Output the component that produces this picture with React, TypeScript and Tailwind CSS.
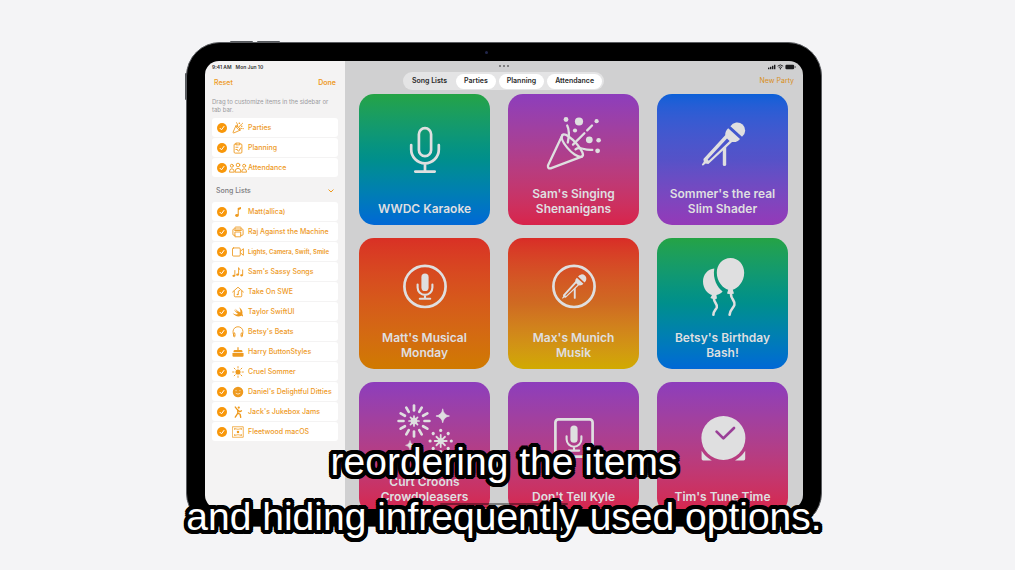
import type { ReactNode } from "react";

const ink = "#dfdfe0";

function Icon({ children }: { children: ReactNode }) {
  return (
    <svg
      viewBox="0 0 64 64"
      className="size-16"
      fill="none"
      stroke={ink}
      strokeWidth={2.7}
      strokeLinecap="round"
      strokeLinejoin="round"
      aria-hidden="true"
    >
      {children}
    </svg>
  );
}

function StageMic() {
  return (
    <g stroke="none" fill={ink}>
      <path d="M39.4 15.2 A8 8 0 1 1 51 25.8 Z" />
      <path
        d="M37.2 17.2 L49 28 Q46.6 31.6 41 31 L17.4 53 L14.6 52.6 L11.8 54.8 L10.8 53.6 L12.8 50.8 L12.4 48 L34.2 24.2 Q34 20 37.2 17.2 Z M36 27.4 L16.6 48.6 L17.8 49.8 L38.6 30 Z"
        fillRule="evenodd"
      />
      <path d="M31.8 38.6 L35.2 35.4 V53.4 A1.7 1.7 0 0 1 31.8 53.4 Z" />
    </g>
  );
}

function SmallMic() {
  return (
    <>
      <rect x="28.4" y="18.6" width="7.2" height="17.4" rx="3.6" fill={ink} stroke="none" />
      <path d="M24.6 29.5v3a7.4 7.4 0 0 0 14.8 0v-3M32 40v3.8M26.8 43.8h10.4" strokeWidth="2.1" />
    </>
  );
}

const rays = [0, 30, 60, 90, 120, 150, 180, 210, 240, 270, 300, 330];
const rays8 = [0, 45, 90, 135, 180, 225, 270, 315];

function Sparkle({ x, y, s }: { x: number; y: number; s: number }) {
  return (
    <path
      transform={`translate(${x} ${y}) scale(${s})`}
      d="M0-7.5Q1-1 7.5 0Q1 1 0 7.5Q-1 1-7.5 0Q-1-1 0-7.5Z"
      fill={ink}
      strokeWidth="0.8"
    />
  );
}

const cards: { title: string; gradient: string; icon: ReactNode }[] = [
  {
    title: "WWDC Karaoke",
    gradient: "bg-linear-to-b from-[#25a345] via-[#008f8c] to-[#0368d6]",
    icon: (
      <Icon>
        <rect x="25.9" y="10.2" width="12.2" height="28" rx="6.1" />
        <path d="M18.2 27v4.5a13.8 13.8 0 0 0 27.6 0V27M32 45.5v8M22.3 53.6h19.4" />
      </Icon>
    ),
  },
  {
    title: "Sam's Singing Shenanigans",
    gradient: "bg-linear-to-b from-[#8d3dbc] to-[#d8234a]",
    icon: (
      <Icon>
        <g strokeWidth="2.3">
          <path d="M20.3 24.2 L6 54.6 Q5.6 57.8 8.6 57.4 L39.8 45.6" />
          <path d="M20.3 24.2 C22.5 21.5 30 27.2 35.2 33.4 C40 39.2 42.6 44.4 39.8 45.6 C36 46.8 29.4 41.8 25.2 36.6 C20.6 31 18.8 26.2 20.3 24.2Z" />
          <path d="M25.2 14.5 C27.5 19 27.2 25 25.8 31.5 M50 14.5 L45.2 19.4 M42.4 22.2 L31 33.6 M33.5 38.4 C38 34.8 41 39.6 50.3 38.8" />
        </g>
        <g fill={ink} stroke="none">
          <circle cx="24" cy="8.5" r="2.4" />
          <circle cx="37" cy="10.5" r="4.1" />
          <circle cx="54.6" cy="10.2" r="2.1" />
          <circle cx="33" cy="19.5" r="2.1" />
          <circle cx="47.3" cy="28.8" r="3.4" />
          <circle cx="56.6" cy="29.2" r="2.3" />
          <circle cx="55.6" cy="39.8" r="2.4" />
        </g>
      </Icon>
    ),
  },
  {
    title: "Sommer's the real Slim Shader",
    gradient: "bg-linear-to-b from-[#0a60d8] via-[#5552c8] to-[#9439b8]",
    icon: (
      <Icon>
        <StageMic />
      </Icon>
    ),
  },
  {
    title: "Matt's Musical Monday",
    gradient: "bg-linear-to-b from-[#d93025] to-[#d07a00]",
    icon: (
      <Icon>
        <circle cx="32" cy="31.4" r="20.6" />
        <SmallMic />
      </Icon>
    ),
  },
  {
    title: "Max's Munich Musik",
    gradient: "bg-linear-to-b from-[#d92c27] via-[#cf6a22] to-[#d1aa00]",
    icon: (
      <Icon>
        <circle cx="32" cy="31.4" r="20.6" />
        <g transform="translate(14 13) scale(0.56)">
          <StageMic />
        </g>
      </Icon>
    ),
  },
  {
    title: "Betsy's Birthday Bash!",
    gradient: "bg-linear-to-b from-[#25a345] via-[#008f8c] to-[#0368d6]",
    icon: (
      <Icon>
        <g fill={ink} stroke="none">
          <path d="M39.5 3 C47.5 3 53.2 9.6 53.2 17.8 C53.2 26.6 46.8 33.6 41.8 34.8 L43 38.4 Q39.5 39.6 36 38.4 L37.2 34.8 C32.2 33.6 25.8 26.6 25.8 17.8 C25.8 9.6 31.5 3 39.5 3Z" />
          <path d="M23.3 13.4 C16.5 13.8 12 19.8 12 26.4 C12 33.8 17 39 21 40 L19.4 43 Q22.6 44.8 26 43.4 L25.4 40 C27.8 39.6 30.2 38.2 31.6 36.4 C26.6 32.2 21.4 24 23.3 13.4Z" />
        </g>
        <path
          d="M40 39.4 C40 44.4 44.6 45.8 43.4 50 C42.4 53.4 38.6 54.8 38.6 59.8 M23 44 C23 48 27 49 25.8 52.4 C24.8 55 22.4 56 22.4 59.8"
          strokeWidth="2.6"
        />
      </Icon>
    ),
  },
  {
    title: "Curt Croons Crowdpleasers",
    gradient: "bg-linear-to-b from-[#8d3dbc] to-[#d8234a]",
    icon: (
      <Icon>
        {rays.map((a) => (
          <path key={a} transform={`translate(21 22) rotate(${a})`} d="M0-10.5V-15.4" />
        ))}
        <circle cx="21" cy="22" r="3.4" fill={ink} stroke="none" />
        {rays8.map((a) => (
          <path key={a} transform={`translate(21 22) rotate(${a})`} d="M0-1V-5" strokeWidth="1.7" />
        ))}
        <circle cx="47.7" cy="42" r="3" fill={ink} stroke="none" />
        {rays8.map((a) => (
          <g key={a} transform={`translate(47.7 42) rotate(${a})`}>
            <path d="M0-1V-6" strokeWidth="1.8" />
            <circle cy="-10.6" r="1.6" fill={ink} stroke="none" />
          </g>
        ))}
        <Sparkle x={49.7} y={17} s={0.9} />
        <Sparkle x={17} y={46.3} s={0.6} />
      </Icon>
    ),
  },
  {
    title: "Don't Tell Kyle",
    gradient: "bg-linear-to-b from-[#8d3dbc] to-[#d8234a]",
    icon: (
      <Icon>
        <rect x="13.4" y="13.4" width="37.2" height="37.2" rx="3" />
        <g transform="translate(0 0.8)">
          <SmallMic />
        </g>
      </Icon>
    ),
  },
  {
    title: "Tim's Tune Time",
    gradient: "bg-linear-to-b from-[#8d3dbc] to-[#d8234a]",
    icon: (
      <Icon>
        <g fill={ink} stroke="none">
          <circle cx="32.4" cy="32" r="22" />
          <path d="M10.6 44.8V52.8Q10.6 54.4 12.2 54.4H20.8A26 26 0 0 1 10.6 44.8Z" />
          <path d="M54.2 44.8V52.8Q54.2 54.4 52.6 54.4H44A26 26 0 0 0 54.2 44.8Z" />
        </g>
        <path d="M25.6 25.6L32.4 32.4L43 22" stroke="#9a3f97" />
      </Icon>
    ),
  },
];

type Item = { label: string; icon: ReactNode; small?: boolean; wide?: boolean };

const solid = { fill: "currentColor", stroke: "none" };

const pages: Item[] = [
  {
    label: "Parties",
    icon: (
      <>
        <path d="M5.2 5L1.4 13.6Q1.2 14.8 2.4 14.6L11 10.8Q8.5 10.4 7 8.4Q5.4 6.6 5.2 5C7 4.6 11.4 9 11 10.8" />
        <path d="M7 2.2Q8 4 7.2 6.4M12.8 2.8L8.8 7M9.8 8.6Q11 7.8 13.4 8.6" />
        <g {...solid}>
          <circle cx="6" cy="1" r=".7" />
          <circle cx="9.8" cy="1.6" r="1.1" />
          <circle cx="14" cy="1.6" r=".7" />
          <circle cx="13" cy="5.6" r="1" />
          <circle cx="15" cy="8.8" r=".7" />
        </g>
      </>
    ),
  },
  {
    label: "Planning",
    icon: (
      <path d="M5.6 2.6H4.2Q2.8 2.6 2.8 4V13.4Q2.8 14.8 4.2 14.8H11.8Q13.2 14.8 13.2 13.4V4Q13.2 2.6 11.8 2.6H10.4M5.6 1.4H10.4V3.8H5.6ZM5.2 7H8M5.2 10H7M7.4 11L8.8 12.4L12 7.4" />
    ),
  },
  {
    label: "Attendance",
    wide: true,
    icon: (
      <>
        <circle cx="3.8" cy="5" r="2" />
        <circle cx="12" cy="4" r="2.4" />
        <circle cx="20.2" cy="5" r="2" />
        <path d="M.6 13Q.6 9 3.8 9Q7 9 7 13ZM8 13Q8 8.4 12 8.4Q16 8.4 16 13ZM17 13Q17 9 20.2 9Q23.4 9 23.4 13Z" />
      </>
    ),
  },
];

const songs: Item[] = [
  {
    label: "Matt(allica)",
    icon: (
      <g {...solid}>
        <path d="M7.6 2.8L12 1.2V4L9 5.2V12H7.6Z" />
        <ellipse cx="6.6" cy="12.6" rx="2.4" ry="1.9" />
      </g>
    ),
  },
  {
    label: "Raj Against the Machine",
    icon: (
      <>
        <path d="M4 4V2Q4 1.4 4.8 1.4H11.2Q12 1.4 12 2V4M4 12.4H2.6Q1.2 12.4 1.2 11V5.4Q1.2 4 2.6 4H13.4Q14.8 4 14.8 5.4V11Q14.8 12.4 13.4 12.4H12M4.4 8H11.6V14.4H4.4Z" />
        <path d="M3.6 6H12.4" />
      </>
    ),
  },
  {
    label: "Lights, Camera, Swift, Smile",
    small: true,
    icon: (
      <path d="M2 2.6H9.6Q11 2.6 11 4V12Q11 13.4 9.6 13.4H2Q.6 13.4 .6 12V4Q.6 2.6 2 2.6ZM11.4 6.8L15.2 3.6V12.4L11.4 9.2" />
    ),
  },
  {
    label: "Sam's Sassy Songs",
    icon: (
      <>
        <g {...solid}>
          <ellipse cx="2.4" cy="13" rx="1.9" ry="1.5" />
          <ellipse cx="7.4" cy="11.6" rx="1.9" ry="1.5" />
          <ellipse cx="12.8" cy="12.4" rx="1.9" ry="1.5" />
        </g>
        <path d="M3.8 13V6M8.8 11.4V2.2Q9 4 10.6 5M14.2 12V5.2" />
      </>
    ),
  },
  {
    label: "Take On SWE",
    icon: (
      <>
        <path d="M.8 8L8 1.6L15.2 8M3 6.8V13.2Q3 14.4 4.2 14.4H11.8Q13 14.4 13 13.2V6.8M8.4 11V6.8L10.4 6" />
        <ellipse cx="7.4" cy="11.2" rx="1.3" ry="1" {...solid} />
      </>
    ),
  },
  {
    label: "Taylor SwiftUI",
    icon: (
      <path
        {...solid}
        d="M9.4 1.6C13.4 4.2 14.6 7.8 13.8 10.6C15 12.2 14.8 13.8 14.6 14.2C13.8 12.8 12.6 13 11.8 13.4C8 15 3.4 13.2.8 9.8C3.6 11.6 6.4 11.6 8.2 10.6C5.6 8.6 3.6 6.2 2.2 4.2C4.2 5.8 6.4 7.4 7.6 8C6.2 6.6 4.6 4.4 3.8 3.2C6 5.2 8.4 7.2 11 8.6C11.6 6.8 10.8 3.8 9.4 1.6Z"
      />
    ),
  },
  {
    label: "Betsy's Beats",
    icon: (
      <>
        <path d="M3 13Q1 10 1.4 7.4A6.6 6.4 0 0 1 14.6 7.4Q15 10 13 13" />
        <rect x="2" y="9.4" width="2" height="5" rx="1" />
        <rect x="12" y="9.4" width="2" height="5" rx="1" />
      </>
    ),
  },
  {
    label: "Harry ButtonStyles",
    icon: (
      <g {...solid}>
        <path d="M7.2 1.6H8.8V5.4H12.6Q14 5.6 14 7V8.4H2V7Q2 5.6 3.4 5.4H7.2Z" />
        <path d="M.6 9.2H15.4V13Q15.4 14.4 14 14.4H2Q.6 14.4 .6 13Z" />
      </g>
    ),
  },
  {
    label: "Cruel Sommer",
    icon: (
      <>
        <circle cx="8" cy="8" r="3.4" {...solid} />
        {rays8.map((a) => (
          <path key={a} transform={`rotate(${a} 8 8)`} d="M8 .8V2.6" />
        ))}
      </>
    ),
  },
  {
    label: "Daniel's Delightful Ditties",
    icon: (
      <>
        <circle cx="8" cy="8" r="7" {...solid} />
        <path d="M5.4 10Q8 12 10.6 10M5.4 5.8V6.4M10.6 5.8V6.4" stroke="#fde3bb" />
      </>
    ),
  },
  {
    label: "Jack's Jukebox Jams",
    icon: (
      <>
        <circle cx="9" cy="2" r="1.5" {...solid} />
        <path d="M4.4 1.4L7.6 5.4L7.8 9.4L4.4 14.8M7.8 9.4L10.8 11L11.6 15M7.8 5.4L10.4 7.6L12.6 6.4" strokeWidth="1.8" />
      </>
    ),
  },
  {
    label: "Fleetwood macOS",
    icon: (
      <>
        <path d="M1 1H15V15H1ZM3.6 3.6Q8 5.4 12.4 3.6M3.6 12.4Q8 10.6 12.4 12.4M3.6 3.6V4.8M12.4 3.6V4.8M3.6 12.4V11.2M12.4 12.4V11.2" strokeWidth="1" />
        <circle cx="8" cy="8" r="1.7" {...solid} />
      </>
    ),
  },
];

function Row({ item }: { item: Item }) {
  return (
    <li>
      <label className="flex h-[19px] items-center rounded-[3px] bg-white pl-[5px] text-[#ee9a1f]">
        <span className="grid size-[10px] shrink-0 place-items-center">
          <input
            type="checkbox"
            defaultChecked
            className="col-start-1 row-start-1 size-[10px] appearance-none rounded-full bg-[#f8970a]"
          />
          <svg
            viewBox="0 0 10 10"
            className="pointer-events-none col-start-1 row-start-1 size-[10px]"
            fill="none"
            stroke="#fff"
            strokeLinecap="round"
            aria-hidden="true"
          >
            <path d="M3 5.3L4.5 6.8L7 3.4" />
          </svg>
        </span>
        <span className="flex w-[21px] shrink-0 justify-center">
          <svg
            viewBox={item.wide ? "0 0 24 16" : "0 0 16 16"}
            className={item.wide ? "h-3 w-[18px]" : "size-3"}
            fill="none"
            stroke="currentColor"
            strokeWidth={1.2}
            strokeLinecap="round"
            strokeLinejoin="round"
            aria-hidden="true"
          >
            {item.icon}
          </svg>
        </span>
        <span
          className={
            item.small
              ? "text-[6px] leading-[10px] font-semibold whitespace-nowrap"
              : "text-[7px] leading-[10px] font-medium whitespace-nowrap"
          }
        >
          {item.label}
        </span>
      </label>
    </li>
  );
}

function Sidebar() {
  return (
    <aside className="w-[140px] shrink-0 bg-[#f4f3f3] px-[7px]">
      <div className="flex h-[11px] items-center gap-[4px] text-[5px] leading-[8px] font-semibold text-[#333]">
        <span>9:41 AM</span>
        <span>Mon Jun 10</span>
      </div>
      <div className="flex h-[22px] items-center justify-between px-[2px] text-[7px] font-medium text-[#ee9a1f]">
        <button type="button">Reset</button>
        <button type="button" className="font-semibold">
          Done
        </button>
      </div>
      <p className="mt-[4px] text-[6px] leading-[8px] text-[#9a9a9e]">
        Drag to customize items in the sidebar or tab bar.
      </p>
      <ul className="mt-[4px] flex flex-col gap-px">
        {pages.map((p) => (
          <Row key={p.label} item={p} />
        ))}
      </ul>
      <button
        type="button"
        className="flex h-[25px] w-full items-center justify-between px-[4px] pt-[3px] text-[7px] font-medium text-[#7a7a7d]"
      >
        Song Lists
        <svg viewBox="0 0 6 4" className="h-1 w-[6px]" fill="none" stroke="#ee9a1f" strokeLinecap="round" aria-hidden="true">
          <path d="M.8 .8L3 3L5.2 .8" />
        </svg>
      </button>
      <ul className="flex flex-col gap-px">
        {songs.map((s) => (
          <Row key={s.label} item={s} />
        ))}
      </ul>
    </aside>
  );
}

function StatusIcons() {
  return (
    <svg viewBox="0 0 28 6" className="h-[6px] w-7" fill="#1c1c1e" aria-hidden="true">
      <rect x="0" y="3.6" width="1.4" height="1.6" />
      <rect x="2" y="2.8" width="1.4" height="2.4" />
      <rect x="4" y="1.8" width="1.4" height="3.4" />
      <rect x="6" y=".8" width="1.4" height="4.4" />
      <path d="M9.6 2.2Q12.4-.4 15.2 2.2M10.8 3.5Q12.4 2.2 14 3.5" fill="none" stroke="#1c1c1e" strokeWidth=".9" />
      <circle cx="12.4" cy="4.7" r=".7" />
      <rect x="17.4" y=".8" width="8.8" height="4.4" rx="1.2" />
      <rect x="26.8" y="2.2" width=".7" height="1.6" />
    </svg>
  );
}

function Main() {
  return (
    <main className="min-w-0 flex-1 bg-[#d0d0d1]">
      <div className="flex h-[11px] items-center justify-end pr-[7px]">
        <StatusIcons />
      </div>
      <div className="grid h-[18px] grid-cols-[1fr_auto_1fr] items-center pr-[9px]">
        <nav className="col-start-2 mr-[132px] flex h-[18px] items-center gap-[3px] justify-self-start rounded-full bg-[#e4e4e5] pr-[2px] text-[7px] font-semibold text-[#2a2a2a]">
          <button type="button" className="h-[15px] pr-[6px] pl-[9px]">
            Song Lists
          </button>
          {pages.map((p) => (
            <button type="button" key={p.label} className="h-[15px] rounded-full bg-white px-[8px]">
              {p.label}
            </button>
          ))}
        </nav>
        <button type="button" className="col-start-3 justify-self-end text-[7px] whitespace-nowrap text-[#d98f22]">
          New Party
        </button>
      </div>
      <div className="mt-[4px] grid grid-cols-3 gap-x-[18px] gap-y-[13px] pr-[15px] pl-[14px]">
        {cards.map((c) => (
          <article
            key={c.title}
            className={`flex aspect-square flex-col items-center rounded-[15px] px-[8px] pb-[9px] ${c.gradient}`}
          >
            <div className="flex min-h-0 flex-1 items-center pt-[5px]">{c.icon}</div>
            <h2 className="max-w-[112px] text-center text-[12px] leading-[15px] font-semibold text-[#dfdfe0]">
              {c.title}
            </h2>
          </article>
        ))}
      </div>
    </main>
  );
}

export default function App() {
  return (
    <div className="relative min-h-screen overflow-hidden bg-[#f4f4f6] pt-[42px] pr-[7px] font-['Inter','Liberation_Sans',sans-serif]">
      <div className="relative mx-auto max-w-[636px]">
        <span className="absolute -top-px left-[44px] h-[2px] w-[23px] rounded-full bg-[#55585c]" />
        <span className="absolute -top-px left-[71px] h-[2px] w-[23px] rounded-full bg-[#55585c]" />
        <span className="absolute top-[31px] -left-px h-[27px] w-[2px] rounded-full bg-[#55585c]" />
        <div className="relative rounded-[34px] border border-[#5a5c60] bg-black p-[18px] pb-[17px]">
          <span className="absolute top-[8px] left-[298px] size-[3px] rounded-full bg-[#20264a]" />
          <div className="relative flex h-[448px] overflow-hidden rounded-[14px]">
            <Sidebar />
            <Main />
            <div className="absolute top-[4px] left-1/2 flex -translate-x-1/2 gap-[2px]">
              <i className="size-[2px] rounded-full bg-[#666]" />
              <i className="size-[2px] rounded-full bg-[#666]" />
              <i className="size-[2px] rounded-full bg-[#666]" />
            </div>
            <div className="absolute bottom-[4px] left-1/2 h-[2px] w-[128px] -translate-x-1/2 rounded-full bg-black/40" />
          </div>
        </div>
      </div>
      <p className="absolute inset-x-0 top-[434px] pr-[7px] text-center font-['Liberation_Sans',Arial,sans-serif] text-[39px] leading-[55px] text-white [text-shadow:4px_0_#000,-4px_0_#000,0_4px_#000,0_-4px_#000,3px_3px_#000,-3px_3px_#000,3px_-3px_#000,-3px_-3px_#000,4px_2px_#000,4px_-2px_#000,-4px_2px_#000,-4px_-2px_#000,2px_4px_#000,-2px_4px_#000,2px_-4px_#000,-2px_-4px_#000,2px_2px_#000,-2px_2px_#000,2px_-2px_#000,-2px_-2px_#000]">
        reordering the items
        <br />
        and hiding infrequently used options.
      </p>
    </div>
  );
}
